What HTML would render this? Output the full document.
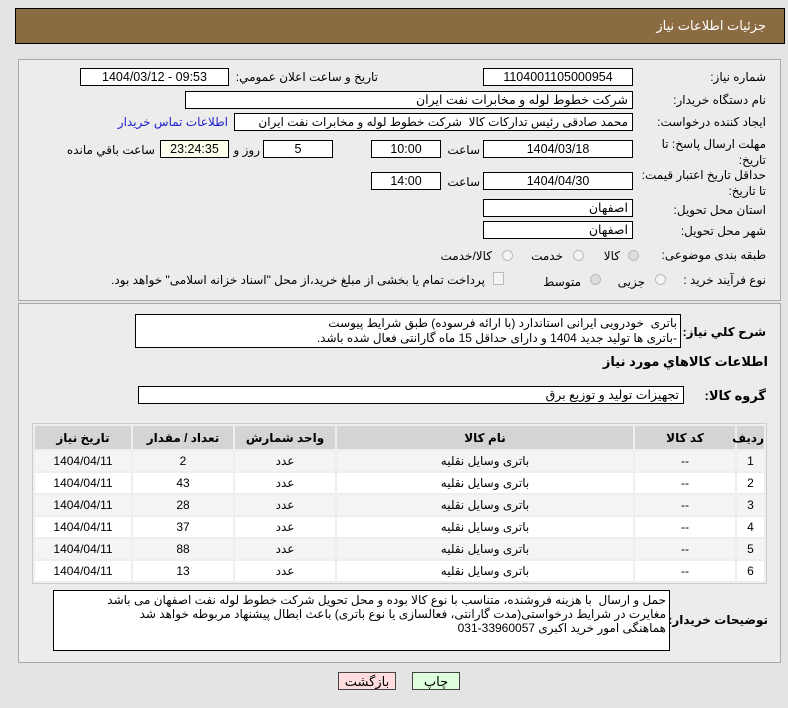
<!DOCTYPE html>
<html><head><meta charset="utf-8"><style>
body{margin:0;width:788px;height:708px;background:#e4e4e4;font-family:"Liberation Sans","DejaVu Sans",sans-serif;font-size:12px;color:#000;position:relative;overflow:hidden}
.a{position:absolute}
.hdr{left:15px;top:8px;width:768px;height:34px;background:#8b6b41;border:1px solid #000;color:#fff;font-size:13px}
.pan{left:18px;width:761px;background:#ececec;border:1px solid #a8a8a8}
.box{position:absolute;background:#fff;border:1px solid #000;height:18px;line-height:17px;text-align:center;font-size:12.5px;box-sizing:border-box;overflow:hidden;white-space:nowrap}
.l{position:absolute;direction:rtl;text-align:right;white-space:nowrap;font-size:12px}
.r{text-align:right;padding-right:4px;direction:rtl}
.rad{position:absolute;width:11px;height:11px;border-radius:50%;border:1px solid #bbb;background:#f4f4f4;box-sizing:border-box}
table{position:absolute;left:32px;top:423px;width:735px;border-collapse:separate;border-spacing:2px;background:#eee;border:1px solid #ccc;table-layout:fixed;box-sizing:border-box}
td{height:20px;padding:0;text-align:center;font-size:12px;background:#fff}
th{height:23px;padding:0;background:#d4d4d4;font-size:12px}
tr.g td{background:#f4f4f4}
.btn{position:absolute;top:672px;height:18px;border:1px solid #444;text-align:center;line-height:17px;font-size:13px;box-sizing:border-box}
</style></head><body>
<div class="a hdr"><span class="a" style="right:18px;top:9px">جزئیات اطلاعات نیاز</span></div>
<div class="a pan" style="top:59px;height:240px"></div>
<div class="a pan" style="top:303px;height:358px"></div>

<span class="l" style="right:22px;top:70px">شماره نیاز:</span>
<div class="box" style="left:483px;top:68px;width:150px">1104001105000954</div>
<span class="l" style="right:410px;top:70px">تاریخ و ساعت اعلان عمومي:</span>
<div class="box" style="left:80px;top:68px;width:149px">1404/03/12 - 09:53</div>

<span class="l" style="right:22px;top:93px">نام دستگاه خریدار:</span>
<div class="box r" style="left:185px;top:91px;width:448px">شرکت خطوط لوله و مخابرات نفت ایران</div>

<span class="l" style="right:22px;top:115px">ایجاد کننده درخواست:</span>
<div class="box r" style="left:234px;top:113px;width:399px;font-size:12px">محمد صادقی رئیس تدارکات کالا &nbsp;شرکت خطوط لوله و مخابرات نفت ایران</div>
<span class="l" style="right:560px;top:115px;color:#2020d0">اطلاعات تماس خریدار</span>

<span class="l" style="right:22px;top:136px;line-height:16px">مهلت ارسال پاسخ: تا<br>تاریخ:</span>
<div class="box" style="left:483px;top:140px;width:150px">1404/03/18</div>
<span class="l" style="right:308px;top:143px">ساعت</span>
<div class="box" style="left:371px;top:140px;width:70px">10:00</div>
<div class="box" style="left:263px;top:140px;width:70px">5</div>
<span class="l" style="right:528px;top:143px">روز و</span>
<div class="box" style="left:160px;top:140px;width:69px;background:#ffffee">23:24:35</div>
<span class="l" style="right:633px;top:143px">ساعت باقي مانده</span>

<span class="l" style="right:22px;top:167px;line-height:16px">حداقل تاریخ اعتبار قیمت:<br>تا تاریخ:</span>
<div class="box" style="left:483px;top:172px;width:150px">1404/04/30</div>
<span class="l" style="right:308px;top:175px">ساعت</span>
<div class="box" style="left:371px;top:172px;width:70px">14:00</div>

<span class="l" style="right:22px;top:203px">استان محل تحویل:</span>
<div class="box r" style="left:483px;top:199px;width:150px">اصفهان</div>
<span class="l" style="right:22px;top:224px">شهر محل تحویل:</span>
<div class="box r" style="left:483px;top:221px;width:150px">اصفهان</div>

<span class="l" style="right:22px;top:248px">طبقه بندی موضوعی:</span>
<div class="rad" style="left:628px;top:250px;background:#ddd"></div><span class="l" style="right:168px;top:249px">کالا</span>
<div class="rad" style="left:573px;top:250px"></div><span class="l" style="right:225px;top:249px">خدمت</span>
<div class="rad" style="left:502px;top:250px"></div><span class="l" style="right:296px;top:249px">کالا/خدمت</span>

<span class="l" style="right:22px;top:273px">نوع فرآیند خرید :</span>
<div class="rad" style="left:655px;top:274px"></div><span class="l" style="right:143px;top:275px">جزیی</span>
<div class="rad" style="left:590px;top:274px;background:#ddd"></div><span class="l" style="right:207px;top:275px">متوسط</span>
<div class="a" style="left:493px;top:272px;width:9px;height:11px;border:1px solid #bbb;background:#f4f4f4"></div>
<span class="l" style="right:303px;top:273px">پرداخت تمام یا بخشی از مبلغ خرید،از محل "اسناد خزانه اسلامی" خواهد بود.</span>

<span class="l" style="right:22px;top:325px;font-weight:bold;font-size:12px">شرح کلي نیاز:</span>
<div class="box" style="left:135px;top:314px;width:546px;height:34px;text-align:right;line-height:15px;padding:1px 3px 0 0;direction:rtl;font-size:12px">باتری &nbsp;خودرویی ایرانی استاندارد (با ارائه فرسوده) طبق شرایط پیوست<br>-باتری ها تولید جدید 1404 و دارای حداقل 15 ماه گارانتی فعال شده باشد.</div>
<span class="l" style="right:20px;top:354px;font-weight:bold;font-size:13px">اطلاعات کالاهاي مورد نیاز</span>
<span class="l" style="right:22px;top:388px;font-weight:bold;font-size:13px">گروه کالا:</span>
<div class="box r" style="left:138px;top:386px;width:546px">تجهیزات تولید و توزیع برق</div>

<table dir="rtl">
<colgroup><col style="width:27px"><col style="width:100px"><col style="width:296px"><col style="width:100px"><col style="width:100px"><col></colgroup>
<tr><th>ردیف</th><th>کد کالا</th><th>نام کالا</th><th>واحد شمارش</th><th>تعداد / مقدار</th><th>تاریخ نیاز</th></tr>
<tr class="g"><td>1</td><td>--</td><td>باتری وسایل نقلیه</td><td>عدد</td><td>2</td><td>1404/04/11</td></tr>
<tr><td>2</td><td>--</td><td>باتری وسایل نقلیه</td><td>عدد</td><td>43</td><td>1404/04/11</td></tr>
<tr class="g"><td>3</td><td>--</td><td>باتری وسایل نقلیه</td><td>عدد</td><td>28</td><td>1404/04/11</td></tr>
<tr><td>4</td><td>--</td><td>باتری وسایل نقلیه</td><td>عدد</td><td>37</td><td>1404/04/11</td></tr>
<tr class="g"><td>5</td><td>--</td><td>باتری وسایل نقلیه</td><td>عدد</td><td>88</td><td>1404/04/11</td></tr>
<tr><td>6</td><td>--</td><td>باتری وسایل نقلیه</td><td>عدد</td><td>13</td><td>1404/04/11</td></tr>
</table>

<span class="l" style="right:20px;top:613px;font-weight:bold;font-size:12px">توضیحات خریدار:</span>
<div class="box" style="left:53px;top:590px;width:617px;height:61px;text-align:right;line-height:14px;padding:2px 3px 0 0;direction:rtl;font-size:12px;white-space:normal">حمل و ارسال &nbsp;با هزینه فروشنده، متناسب با نوع کالا بوده و محل تحویل شرکت خطوط لوله نفت اصفهان می باشد<br>مغایرت در شرایط درخواستی(مدت گارانتی، فعالسازی یا نوع باتری) باعث ابطال پیشنهاد مربوطه خواهد شد<br>هماهنگی امور خرید اکبری 33960057-031</div>

<div class="btn" style="left:338px;width:58px;background:#fdd">بازگشت</div>
<div class="btn" style="left:412px;width:48px;background:#dfd">چاپ</div>
</body></html>
